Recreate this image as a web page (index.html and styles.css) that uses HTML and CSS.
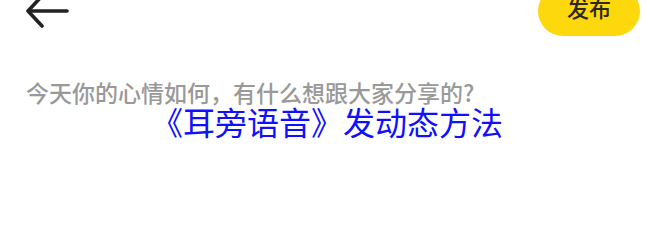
FILE: index.html
```html
<!DOCTYPE html>
<html lang="zh-CN">
<head>
<meta charset="utf-8">
<link rel="stylesheet" href="styles.css">
</head>
<body>
<div class="page">
  <header class="topbar">
    <svg class="back" width="48" height="44" viewBox="0 0 48 44" aria-hidden="true">
      <path d="M44 22 H5 M19 7 L5 22 L19 37" fill="none" stroke="#222" stroke-width="3.6" stroke-linecap="round" stroke-linejoin="round"/>
    </svg>
    <button class="publish">发布</button>
  </header>
  <p class="placeholder">今天你的心情如何，有什么想跟大家分享的?</p>
  <p class="caption">《耳旁语音》发动态方法</p>
</div>
</body>
</html>
```

FILE: styles.css
```css
html, body {
  margin: 0;
  padding: 0;
  background: #ffffff;
}
.page {
  width: 650px;
  height: 220px;
  overflow: hidden;
  font-family: "Noto Sans CJK SC", "Noto Sans", sans-serif;
}
.topbar {
  display: flex;
  justify-content: space-between;
  align-items: center;
  margin-top: -14px;
  padding: 0 10px 0 23px;
  height: 50px;
}
.back {
  display: block;
}
.publish {
  width: 102px;
  height: 50px;
  border: none;
  border-radius: 25px;
  background: #fcd80c;
  color: #2b2a1e;
  font-family: "Noto Sans CJK SC", sans-serif;
  font-size: 22px;
  font-weight: 500;
  padding: 0 0 8px 0;
}
.placeholder {
  margin: 44px 0 0 26px;
  font-size: 23px;
  line-height: 24px;
  font-weight: 500;
  color: #999999;
}
.caption {
  margin: 0;
  padding-left: 4px;
  text-align: center;
  font-size: 32px;
  line-height: 34px;
  color: #1010ff;
}
```
